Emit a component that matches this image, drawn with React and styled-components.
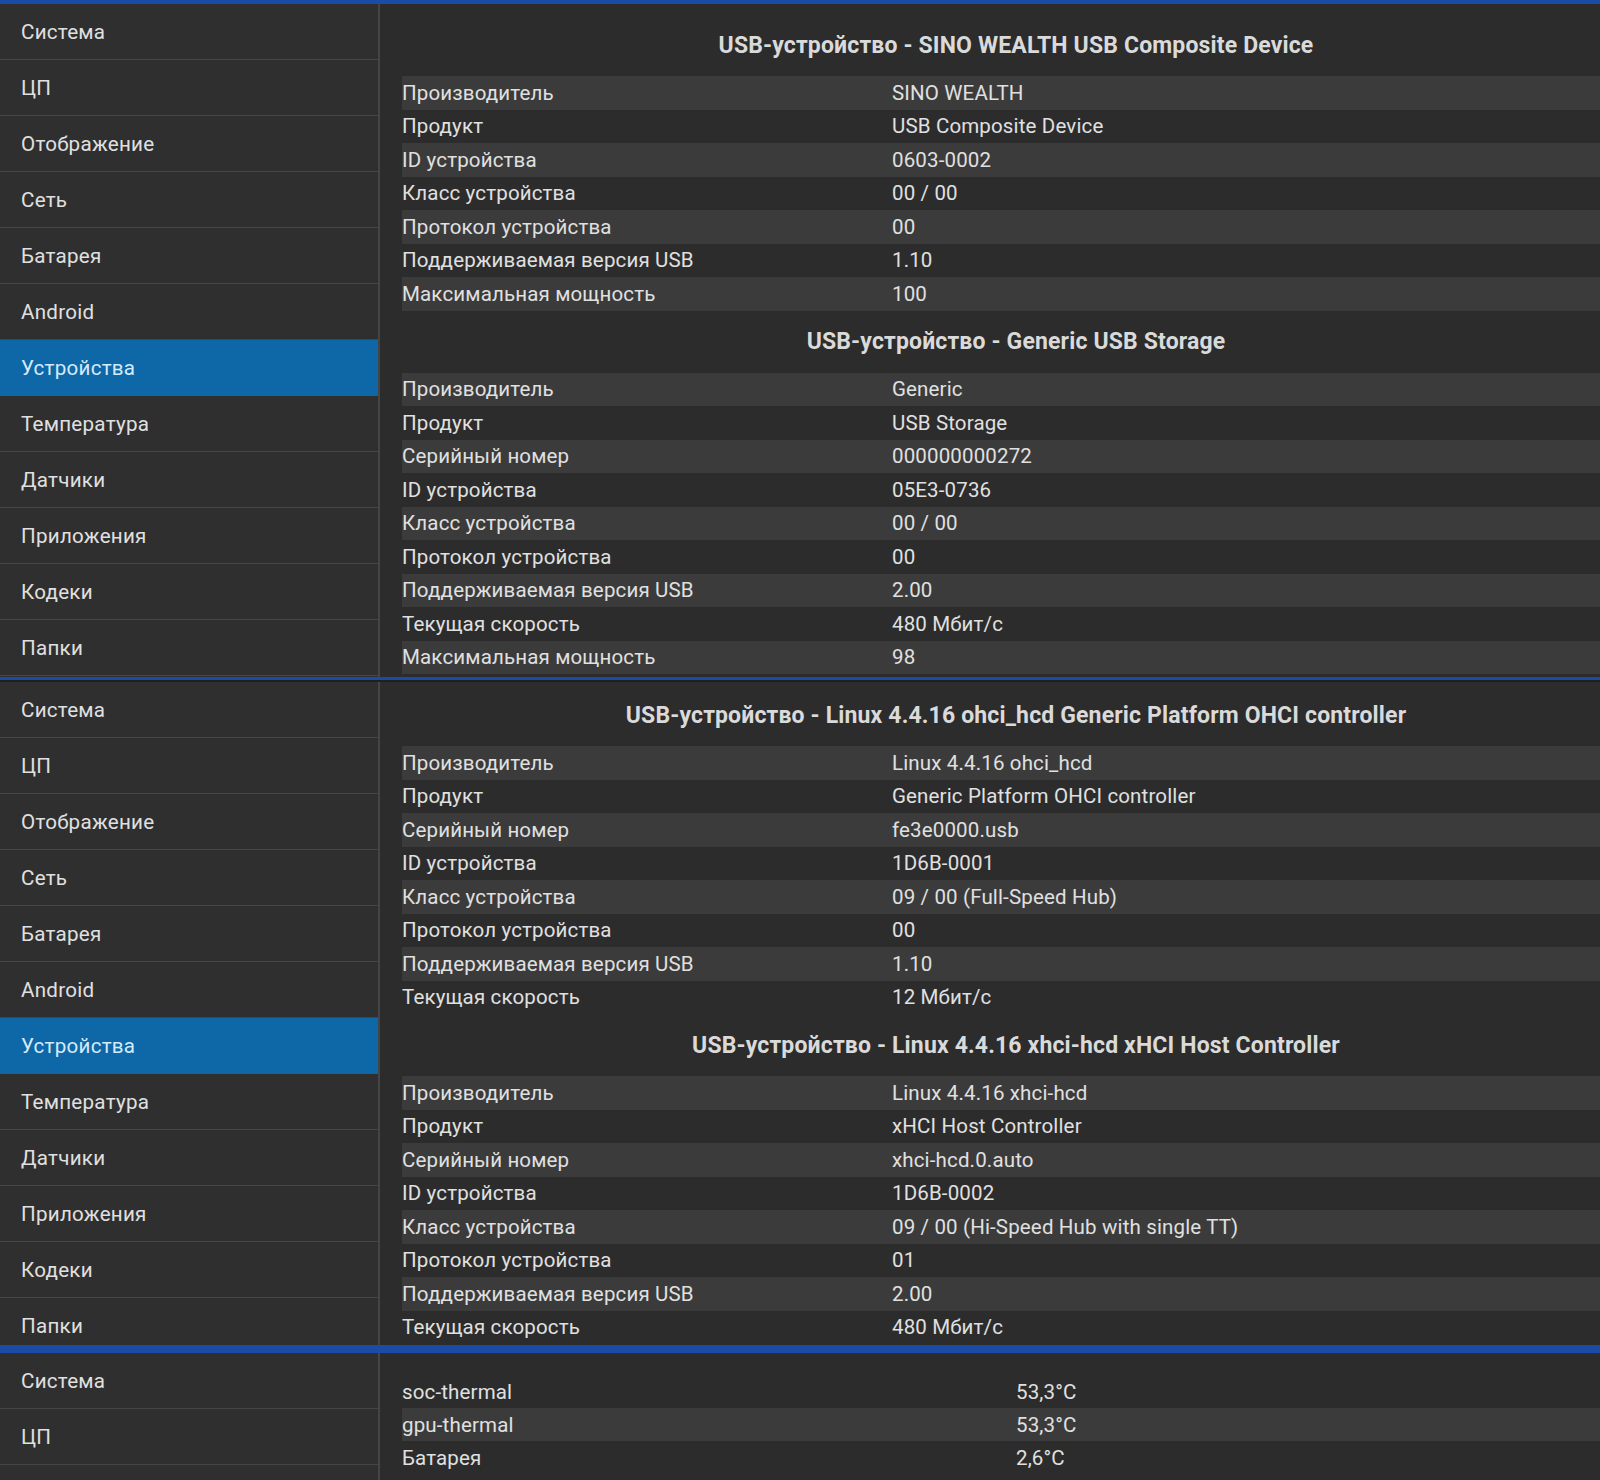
import React from 'react';
import styled, { createGlobalStyle } from 'styled-components';

const GlobalStyle = createGlobalStyle`
  html, body {
    margin: 0;
    padding: 0;
    background: #2d2d2d;
    overflow: hidden;
  }
  body {
    font-family: Roboto, "Noto Sans", "Liberation Sans", sans-serif;
    color: #e0e0e0;
  }
`;

const Page = styled.div`
  width: 1600px;
  height: 1480px;
  overflow: hidden;
  display: flex;
  flex-direction: column;
`;

const Screen = styled.section`
  flex: none;
  height: ${(p) => p.height}px;
  overflow: hidden;
  display: flex;
  flex-direction: column;
`;

const StatusBar = styled.div`
  flex: none;
  height: ${(p) => p.size}px;
  background: #1a4ba6;
  border-bottom: ${(p) => (p.shadow ? '2px solid #1f1f1f' : 'none')};
`;

const Body = styled.div`
  flex: 1;
  display: flex;
  min-height: 0;
`;

const Sidebar = styled.nav`
  flex: none;
  width: 378px;
  background: #2f2f2f;
  border-right: 2px solid #454545;
  display: flex;
  flex-direction: column;
`;

const NavItem = styled.div`
  flex: none;
  height: 55px;
  display: flex;
  align-items: center;
  padding-left: 21px;
  font-size: 20.6px;
  letter-spacing: 0.25px;
  border-bottom: 1px solid ${(p) => (p.active ? '#0e67a7' : '#464646')};
  background: ${(p) => (p.active ? '#0e67a7' : 'transparent')};
  color: ${(p) => (p.active ? '#d6eaf8' : '#e0e0e0')};
`;

const Content = styled.div`
  flex: none;
  width: 1228px;
  padding: ${(p) => p.top}px 0 0 22px;
  background: #2c2c2c;
  display: flex;
  flex-direction: column;
`;

const Heading = styled.h2`
  margin: 0;
  height: 62px;
  display: flex;
  align-items: center;
  justify-content: center;
  font-size: 23px;
  font-weight: 700;
  color: #dadada;
  letter-spacing: 0.15px;
`;

const Table = styled.div`
  display: flex;
  flex-direction: column;
`;

const Row = styled.div`
  flex: none;
  height: ${(p) => p.h}px;
  display: grid;
  grid-template-columns: ${(p) => p.split}% 1fr;
  align-items: center;
  font-size: 20.5px;
  letter-spacing: 0.15px;
  background: ${(p) => (p.striped ? '#3b3b3b' : 'transparent')};
`;

const Cell = styled.span`
  white-space: nowrap;
  color: #e0e0e0;
`;

const menu = [
  'Система',
  'ЦП',
  'Отображение',
  'Сеть',
  'Батарея',
  'Android',
  'Устройства',
  'Температура',
  'Датчики',
  'Приложения',
  'Кодеки',
  'Папки',
];

const usb = [
  {
    title: 'USB-устройство - SINO WEALTH USB Composite Device',
    rows: [
      ['Производитель', 'SINO WEALTH'],
      ['Продукт', 'USB Composite Device'],
      ['ID устройства', '0603-0002'],
      ['Класс устройства', '00 / 00'],
      ['Протокол устройства', '00'],
      ['Поддерживаемая версия USB', '1.10'],
      ['Максимальная мощность', '100'],
    ],
  },
  {
    title: 'USB-устройство - Generic USB Storage',
    rows: [
      ['Производитель', 'Generic'],
      ['Продукт', 'USB Storage'],
      ['Серийный номер', '000000000272'],
      ['ID устройства', '05E3-0736'],
      ['Класс устройства', '00 / 00'],
      ['Протокол устройства', '00'],
      ['Поддерживаемая версия USB', '2.00'],
      ['Текущая скорость', '480 Мбит/с'],
      ['Максимальная мощность', '98'],
    ],
  },
  {
    title: 'USB-устройство - Linux 4.4.16 ohci_hcd Generic Platform OHCI controller',
    rows: [
      ['Производитель', 'Linux 4.4.16 ohci_hcd'],
      ['Продукт', 'Generic Platform OHCI controller'],
      ['Серийный номер', 'fe3e0000.usb'],
      ['ID устройства', '1D6B-0001'],
      ['Класс устройства', '09 / 00 (Full-Speed Hub)'],
      ['Протокол устройства', '00'],
      ['Поддерживаемая версия USB', '1.10'],
      ['Текущая скорость', '12 Мбит/с'],
    ],
  },
  {
    title: 'USB-устройство - Linux 4.4.16 xhci-hcd xHCI Host Controller',
    rows: [
      ['Производитель', 'Linux 4.4.16 xhci-hcd'],
      ['Продукт', 'xHCI Host Controller'],
      ['Серийный номер', 'xhci-hcd.0.auto'],
      ['ID устройства', '1D6B-0002'],
      ['Класс устройства', '09 / 00 (Hi-Speed Hub with single TT)'],
      ['Протокол устройства', '01'],
      ['Поддерживаемая версия USB', '2.00'],
      ['Текущая скорость', '480 Мбит/с'],
    ],
  },
];

const thermal = [
  ['soc-thermal', '53,3°C'],
  ['gpu-thermal', '53,3°C'],
  ['Батарея', '2,6°C'],
];

function Menu({ active, items = menu }) {
  return (
    <Sidebar>
      {items.map((name) => (
        <NavItem key={name} active={name === active}>
          {name}
        </NavItem>
      ))}
    </Sidebar>
  );
}

function InfoTable({ rows, split = 39.9, h = 33.5, oddStripe = false }) {
  return (
    <Table>
      {rows.map(([k, v], i) => (
        <Row key={k + i} h={h} split={split} striped={oddStripe ? i % 2 === 1 : i % 2 === 0}>
          <Cell>{k}</Cell>
          <Cell>{v}</Cell>
        </Row>
      ))}
    </Table>
  );
}

function Device({ device }) {
  return (
    <>
      <Heading>{device.title}</Heading>
      <InfoTable rows={device.rows} />
    </>
  );
}

export default function App() {
  return (
    <Page>
      <GlobalStyle />
      <Screen height={677}>
        <StatusBar size={4} />
        <Body>
          <Menu active="Устройства" />
          <Content top={10}>
            <Device device={usb[0]} />
            <Device device={usb[1]} />
          </Content>
        </Body>
      </Screen>
      <Screen height={668}>
        <StatusBar size={3} shadow />
        <Body>
          <Menu active="Устройства" />
          <Content top={2}>
            <Device device={usb[2]} />
            <Device device={usb[3]} />
          </Content>
        </Body>
      </Screen>
      <Screen height={135}>
        <StatusBar size={8} />
        <Body>
          <Menu active="Температура" items={menu.slice(0, 2)} />
          <Content top={22}>
            <InfoTable rows={thermal} split={50} h={33} oddStripe />
          </Content>
        </Body>
      </Screen>
    </Page>
  );
}
